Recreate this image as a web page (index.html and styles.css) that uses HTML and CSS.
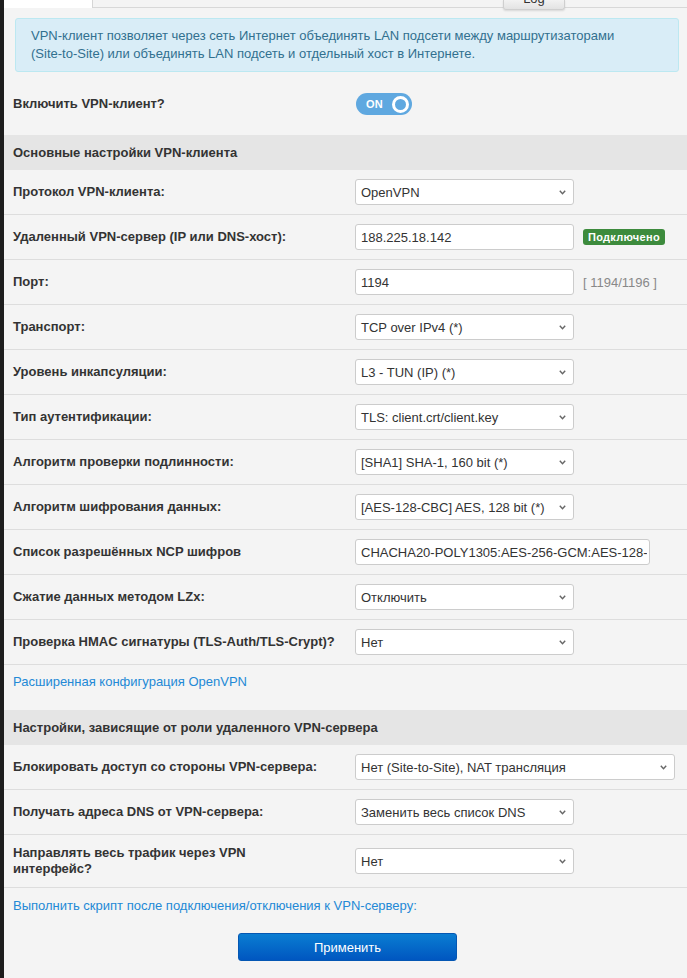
FILE: index.html
```html
<!DOCTYPE html>
<html lang="ru">
<head>
<meta charset="utf-8">
<title>VPN-клиент</title>
<link rel="stylesheet" href="styles.css">
</head>
<body>
<div class="frame">
  <div class="strip"></div>
  <div class="page">
    <div class="tabs">
      <div class="tab-active"></div>
      <div class="tab-rest"><div class="log-btn"><span>Log</span></div></div>
    </div>

    <div class="alert">VPN-клиент позволяет через сеть Интернет объединять LAN подсети между маршрутизаторами<br>(Site-to-Site) или объединять LAN подсеть и отдельный хост в Интернете.</div>

    <div class="toggle-row">
      <div class="label">Включить VPN-клиент?</div>
      <div class="ctrl">
        <div class="toggle"><span class="toggle-text">ON</span><span class="toggle-knob"></span></div>
      </div>
    </div>

    <div class="section-head">Основные настройки VPN-клиента</div>

    <div class="row">
      <div class="label">Протокол VPN-клиента:</div>
      <div class="ctrl"><div class="select"><span>OpenVPN</span><svg class="chev" width="7" height="5" viewBox="0 0 7 5"><path d="M0.8 0.8 L3.5 3.8 L6.2 0.8" fill="none" stroke="#666" stroke-width="1.4"/></svg></div></div>
    </div>

    <div class="row">
      <div class="label">Удаленный VPN-сервер (IP или DNS-хост):</div>
      <div class="ctrl"><div class="input"><span>188.225.18.142</span></div><span class="badge">Подключено</span></div>
    </div>

    <div class="row">
      <div class="label">Порт:</div>
      <div class="ctrl"><div class="input"><span>1194</span></div><span class="hint">[ 1194/1196 ]</span></div>
    </div>

    <div class="row">
      <div class="label">Транспорт:</div>
      <div class="ctrl"><div class="select"><span>TCP over IPv4 (*)</span><svg class="chev" width="7" height="5" viewBox="0 0 7 5"><path d="M0.8 0.8 L3.5 3.8 L6.2 0.8" fill="none" stroke="#666" stroke-width="1.4"/></svg></div></div>
    </div>

    <div class="row">
      <div class="label">Уровень инкапсуляции:</div>
      <div class="ctrl"><div class="select"><span>L3 - TUN (IP) (*)</span><svg class="chev" width="7" height="5" viewBox="0 0 7 5"><path d="M0.8 0.8 L3.5 3.8 L6.2 0.8" fill="none" stroke="#666" stroke-width="1.4"/></svg></div></div>
    </div>

    <div class="row">
      <div class="label">Тип аутентификации:</div>
      <div class="ctrl"><div class="select"><span>TLS: client.crt/client.key</span><svg class="chev" width="7" height="5" viewBox="0 0 7 5"><path d="M0.8 0.8 L3.5 3.8 L6.2 0.8" fill="none" stroke="#666" stroke-width="1.4"/></svg></div></div>
    </div>

    <div class="row">
      <div class="label">Алгоритм проверки подлинности:</div>
      <div class="ctrl"><div class="select"><span>[SHA1] SHA-1, 160 bit (*)</span><svg class="chev" width="7" height="5" viewBox="0 0 7 5"><path d="M0.8 0.8 L3.5 3.8 L6.2 0.8" fill="none" stroke="#666" stroke-width="1.4"/></svg></div></div>
    </div>

    <div class="row">
      <div class="label">Алгоритм шифрования данных:</div>
      <div class="ctrl"><div class="select"><span>[AES-128-CBC] AES, 128 bit (*)</span><svg class="chev" width="7" height="5" viewBox="0 0 7 5"><path d="M0.8 0.8 L3.5 3.8 L6.2 0.8" fill="none" stroke="#666" stroke-width="1.4"/></svg></div></div>
    </div>

    <div class="row">
      <div class="label">Список разрешённых NCP шифров</div>
      <div class="ctrl"><div class="input wide"><span>CHACHA20-POLY1305:AES-256-GCM:AES-128-GCM</span></div></div>
    </div>

    <div class="row">
      <div class="label">Сжатие данных методом LZx:</div>
      <div class="ctrl"><div class="select"><span>Отключить</span><svg class="chev" width="7" height="5" viewBox="0 0 7 5"><path d="M0.8 0.8 L3.5 3.8 L6.2 0.8" fill="none" stroke="#666" stroke-width="1.4"/></svg></div></div>
    </div>

    <div class="row">
      <div class="label">Проверка HMAC сигнатуры (TLS-Auth/TLS-Crypt)?</div>
      <div class="ctrl"><div class="select"><span>Нет</span><svg class="chev" width="7" height="5" viewBox="0 0 7 5"><path d="M0.8 0.8 L3.5 3.8 L6.2 0.8" fill="none" stroke="#666" stroke-width="1.4"/></svg></div></div>
    </div>

    <div class="link-row"><a class="link" href="#">Расширенная конфигурация OpenVPN</a></div>

    <div class="section-head">Настройки, зависящие от роли удаленного VPN-сервера</div>

    <div class="row">
      <div class="label">Блокировать доступ со стороны VPN-сервера:</div>
      <div class="ctrl"><div class="select long"><span>Нет (Site-to-Site), NAT трансляция</span><svg class="chev" width="7" height="5" viewBox="0 0 7 5"><path d="M0.8 0.8 L3.5 3.8 L6.2 0.8" fill="none" stroke="#666" stroke-width="1.4"/></svg></div></div>
    </div>

    <div class="row">
      <div class="label">Получать адреса DNS от VPN-сервера:</div>
      <div class="ctrl"><div class="select"><span>Заменить весь список DNS</span><svg class="chev" width="7" height="5" viewBox="0 0 7 5"><path d="M0.8 0.8 L3.5 3.8 L6.2 0.8" fill="none" stroke="#666" stroke-width="1.4"/></svg></div></div>
    </div>

    <div class="row tall">
      <div class="label">Направлять весь трафик через VPN<br>интерфейс?</div>
      <div class="ctrl"><div class="select"><span>Нет</span><svg class="chev" width="7" height="5" viewBox="0 0 7 5"><path d="M0.8 0.8 L3.5 3.8 L6.2 0.8" fill="none" stroke="#666" stroke-width="1.4"/></svg></div></div>
    </div>

    <div class="script-row"><a class="link" href="#">Выполнить скрипт после подключения/отключения к VPN-серверу:</a></div>

    <div class="button-row"><button class="apply" type="button">Применить</button></div>
  </div>
</div>
</body>
</html>
```

FILE: styles.css
```css
html, body {
  margin: 0;
  padding: 0;
}
body {
  font-family: "Liberation Sans", Arial, sans-serif;
  font-size: 13px;
  color: #333;
  background: #f4f4f4;
}
.frame {
  display: flex;
  min-height: 978px;
}
.strip {
  width: 4px;
  flex: none;
  background: #1d1d1d;
}
.page {
  flex: 1;
  background: #f4f4f4;
  min-width: 0;
}

/* tabs */
.tabs {
  display: flex;
  height: 8px;
}
.tab-active {
  width: 88px;
  background: #fff;
  border-right: 1px solid #d6d6d6;
}
.tab-rest {
  flex: 1;
  display: flex;
  border-bottom: 1px solid #d8d8d8;
  height: 7px;
  padding-left: 410px;
}
.log-btn {
  width: 60px;
  height: 9px;
  border: 1px solid #cfcfcf;
  border-top: none;
  border-radius: 0 0 3px 3px;
  background: linear-gradient(#f2f2f2, #e3e3e3);
  box-shadow: 0 1px 2px rgba(0,0,0,0.12);
  overflow: hidden;
  text-align: center;
  font-size: 13px;
  line-height: 13px;
  color: #333;
  position: relative;
  z-index: 1;
}
.log-btn span {
  display: block;
  margin-top: -8px;
}

/* alert */
.alert {
  margin: 10px 8px 0 11px;
  padding: 8px 15px;
  border: 1px solid #bce8f1;
  border-radius: 3px;
  background: #d9edf7;
  color: #31708f;
  line-height: 18px;
}

/* toggle */
.toggle-row {
  display: grid;
  grid-template-columns: 342px 1fr;
  align-items: center;
  padding: 21px 9px 20px 9px;
}
.toggle {
  width: 56px;
  height: 22px;
  border-radius: 11px;
  background: #5fa8e0;
  display: flex;
  align-items: center;
  justify-content: space-between;
  padding: 0 3px 0 10px;
  box-sizing: border-box;
  margin-left: 1px;
}
.toggle-text {
  color: #fff;
  font-weight: bold;
  font-size: 11px;
  letter-spacing: 0.2px;
}
.toggle-knob {
  width: 11px;
  height: 11px;
  border: 3px solid #fff;
  border-radius: 50%;
  background: #5fa8e0;
}

/* sections and rows */
.section-head {
  background: #e5e5e5;
  height: 35px;
  line-height: 35px;
  padding: 0 9px;
  font-weight: bold;
  color: #333;
}
.row {
  display: grid;
  grid-template-columns: 342px 1fr;
  align-items: center;
  padding: 9px 9px 9px 9px;
  border-bottom: 1px solid #dddddd;
}
.row.tall {
  padding: 10px 9px;
}
.label {
  font-weight: bold;
  line-height: 16px;
  color: #333;
}
.ctrl {
  display: flex;
  align-items: center;
  gap: 9px;
}
.select, .input {
  box-sizing: border-box;
  width: 219px;
  height: 26px;
  background: #fff;
  border: 1px solid #cccccc;
  border-radius: 3px;
  display: flex;
  align-items: center;
  color: #333;
  white-space: nowrap;
}
.select {
  justify-content: space-between;
  padding: 0 7px 0 5px;
}
.select.long {
  width: 320px;
}
.input {
  padding: 0 2px 0 5px;
}
.input.wide {
  width: 295px;
}
.input span {
  display: block;
  overflow: hidden;
  white-space: nowrap;
  flex: 1;
  min-width: 0;
}
.chev {
  flex: none;
  margin-top: 1px;
}
.badge {
  background: #3d8b3d;
  color: #fff;
  font-weight: bold;
  font-size: 11px;
  line-height: 14px;
  padding: 1px 5px;
  border-radius: 3px;
  letter-spacing: 0.3px;
}
.hint {
  color: #888;
}

/* links */
.link {
  color: #2389d6;
  text-decoration: none;
  line-height: 16px;
}
.link-row {
  padding: 9px 9px 20px 9px;
  line-height: 16px;
}
.script-row {
  padding: 10px 9px 0 9px;
  line-height: 16px;
}

/* button */
.button-row {
  display: flex;
  justify-content: center;
  padding: 19px 0 0 4px;
}
.apply {
  width: 219px;
  height: 28px;
  border: 1px solid #0457b3;
  border-radius: 3px;
  background: linear-gradient(#0a7dd2, #0056c0);
  color: #fff;
  font-family: "Liberation Sans", Arial, sans-serif;
  font-size: 13px;
  padding: 0;
}
```
